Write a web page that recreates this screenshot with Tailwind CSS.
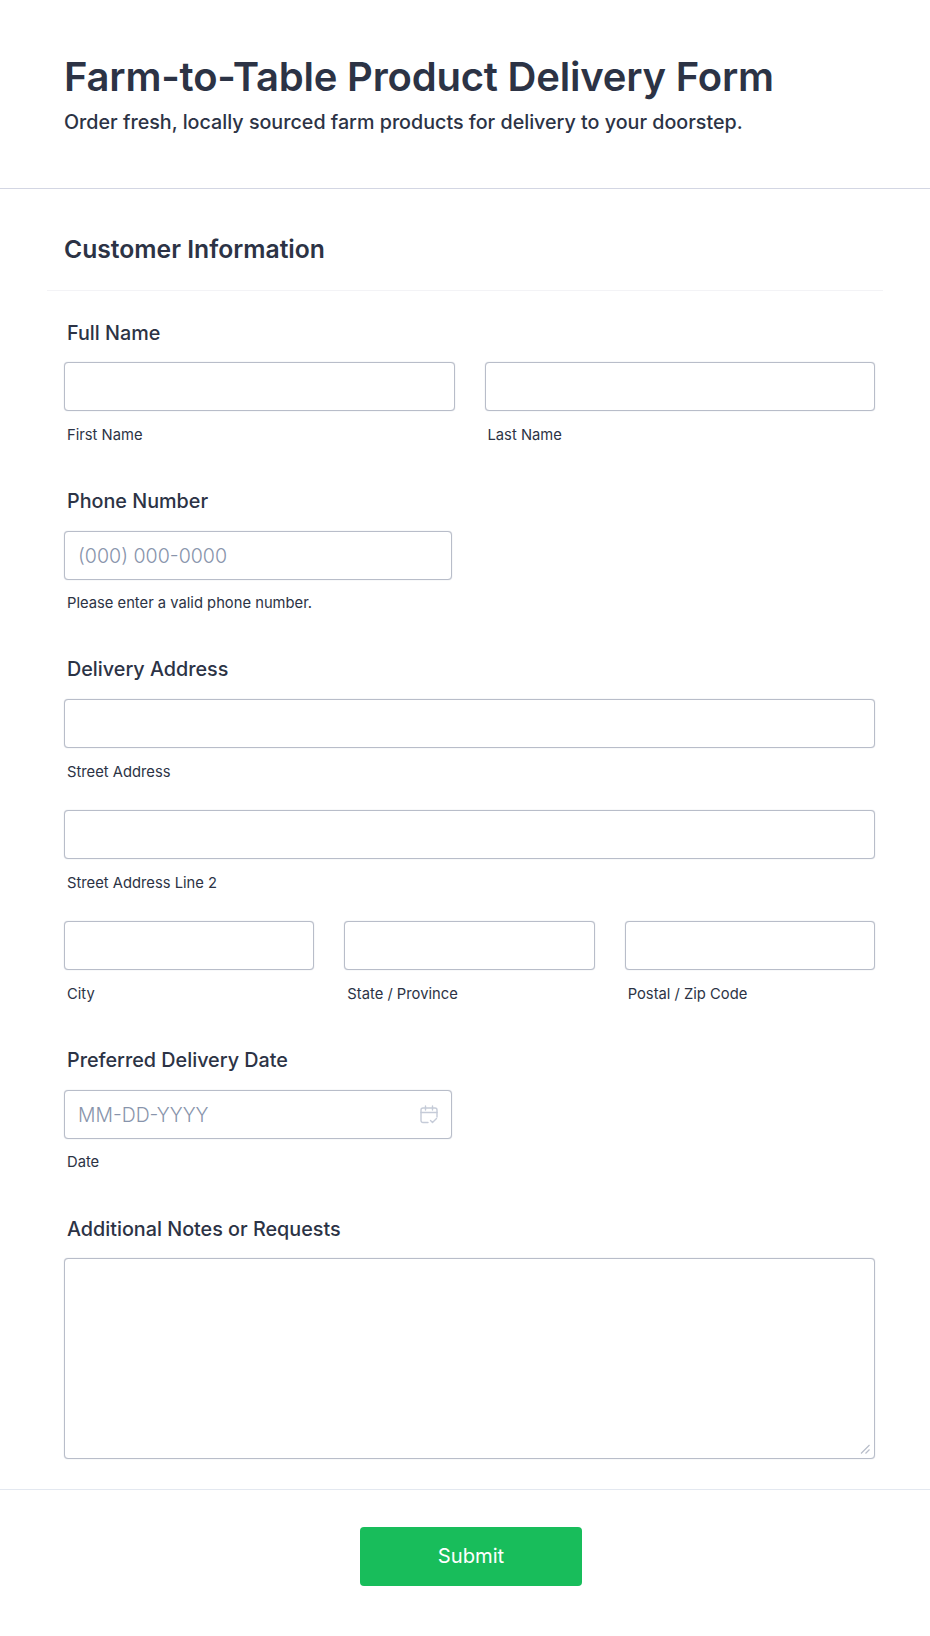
<!DOCTYPE html>
<html lang="en">
<head>
    <meta charset="UTF-8">
    <meta name="viewport" content="width=device-width, initial-scale=1.0">
    <title>Farm-to-Table Product Delivery Form</title>
    <script src="https://cdn.jsdelivr.net/npm/@tailwindcss/browser@4"></script>
</head>
<body class="bg-white font-['Inter',sans-serif] text-[#2c3345]">
    <header class="h-[189px] border-b border-[#d3d6e3] pl-[64px] pt-[50px]">
        <h1 class="text-[40px] leading-[54px] font-semibold tracking-[-0.2px]">Farm-to-Table Product Delivery Form</h1>
        <p class="text-[19.7px] leading-[30px] font-medium mt-[3px]">Order fresh, locally sourced farm products for delivery to your doorstep.</p>
    </header>

    <main class="pl-[47px] pr-[47px]">
        <div class="h-[102px] border-b border-[#f3f3f6] pl-[17px] pt-[44px]">
            <h2 class="text-[24.7px] leading-[32px] font-semibold">Customer Information</h2>
        </div>

        <form class="pl-[17px] pr-[8px]">
            <!-- Full Name -->
            <label class="block pl-[3px] mt-[29px] text-[19.75px] leading-[26px] font-medium">Full Name</label>
            <div class="flex gap-[30px] mt-[16px]">
                <div class="flex-1">
                    <input type="text" class="block w-full h-[49px] rounded-[4px] border border-[#b8bdc9] shadow-[0_0_1px_#b8bdc9] bg-white">
                    <span class="block pl-[3px] mt-[14px] text-[14.75px] leading-[20px]">First Name</span>
                </div>
                <div class="flex-1">
                    <input type="text" class="block w-full h-[49px] rounded-[4px] border border-[#b8bdc9] shadow-[0_0_1px_#b8bdc9] bg-white">
                    <span class="block pl-[3px] mt-[14px] text-[14.75px] leading-[20px]">Last Name</span>
                </div>
            </div>

            <!-- Phone Number -->
            <label class="block pl-[3px] mt-[43px] text-[19.75px] leading-[26px] font-medium">Phone Number</label>
            <input type="tel" placeholder="(000) 000-0000" class="block w-[388px] h-[49px] mt-[17px] px-[13px] rounded-[4px] border border-[#b8bdc9] shadow-[0_0_1px_#b8bdc9] bg-white text-[19.6px] placeholder:text-[#8894ab] font-light">
            <span class="block pl-[3px] mt-[13px] text-[14.75px] leading-[20px]">Please enter a valid phone number.</span>

            <!-- Delivery Address -->
            <label class="block pl-[3px] mt-[43px] text-[19.75px] leading-[26px] font-medium">Delivery Address</label>
            <input type="text" class="block w-full h-[49px] mt-[17px] rounded-[4px] border border-[#b8bdc9] shadow-[0_0_1px_#b8bdc9] bg-white">
            <span class="block pl-[3px] mt-[14px] text-[14.75px] leading-[20px]">Street Address</span>

            <input type="text" class="block w-full h-[49px] mt-[28px] rounded-[4px] border border-[#b8bdc9] shadow-[0_0_1px_#b8bdc9] bg-white">
            <span class="block pl-[3px] mt-[14px] text-[14.75px] leading-[20px]">Street Address Line 2</span>

            <div class="grid grid-cols-3 gap-[30px] mt-[28px]">
                <div>
                    <input type="text" class="block w-full h-[49px] rounded-[4px] border border-[#b8bdc9] shadow-[0_0_1px_#b8bdc9] bg-white">
                    <span class="block pl-[3px] mt-[14px] text-[14.75px] leading-[20px]">City</span>
                </div>
                <div>
                    <input type="text" class="block w-full h-[49px] rounded-[4px] border border-[#b8bdc9] shadow-[0_0_1px_#b8bdc9] bg-white">
                    <span class="block pl-[3px] mt-[14px] text-[14.75px] leading-[20px]">State / Province</span>
                </div>
                <div>
                    <input type="text" class="block w-full h-[49px] rounded-[4px] border border-[#b8bdc9] shadow-[0_0_1px_#b8bdc9] bg-white">
                    <span class="block pl-[3px] mt-[14px] text-[14.75px] leading-[20px]">Postal / Zip Code</span>
                </div>
            </div>

            <!-- Preferred Delivery Date -->
            <label class="block pl-[3px] mt-[43px] text-[19.75px] leading-[26px] font-medium">Preferred Delivery Date</label>
            <div class="relative w-[388px] mt-[17px]">
                <input type="text" placeholder="MM-DD-YYYY" class="block w-full h-[49px] px-[13px] rounded-[4px] border border-[#b8bdc9] shadow-[0_0_1px_#b8bdc9] bg-white text-[19.4px] placeholder:text-[#8894ab] font-light">
                <svg class="absolute right-[14px] top-[15px] w-[18px] h-[19px]" viewBox="0 0 18 19" fill="none" stroke="#c5cbd8" stroke-width="1.4" stroke-linecap="round" stroke-linejoin="round">
                    <path d="M8 17.500H3a2 2 0 0 1-2-2V5a2 2 0 0 1 2-2h12a2 2 0 0 1 2 2v7"/>
                    <path d="M1 7.500h16M5.500 1v4M12.500 1v4"/>
                    <path d="M10.500 15.500l2 2 4-4"/>
                </svg>
            </div>
            <span class="block pl-[3px] mt-[13px] text-[14.75px] leading-[20px]">Date</span>

            <!-- Additional Notes -->
            <label class="block pl-[3px] mt-[44px] text-[19.75px] leading-[26px] font-medium">Additional Notes or Requests</label>
            <div class="relative mt-[16px]">
                <textarea class="block w-full h-[201px] resize-none rounded-[4px] border border-[#b8bdc9] shadow-[0_0_1px_#b8bdc9] bg-white"></textarea>
                <svg class="absolute right-[5px] bottom-[5px] w-[10px] h-[10px]" viewBox="0 0 10 10" fill="none" stroke="#b8bdc9" stroke-width="1.200">
                    <path d="M1 9.500L9.500 1M5.500 9.500L9.500 5.500"/>
                </svg>
            </div>
        </form>
    </main>

    <footer class="mt-[30px] border-t border-[#e3e8f0] flex justify-center pt-[37px]">
        <button type="button" class="w-[222px] h-[59px] ml-[12px] rounded-[4px] bg-[#18bd5b] text-white text-[20.2px] font-normal">Submit</button>
    </footer>
</body>
</html>
